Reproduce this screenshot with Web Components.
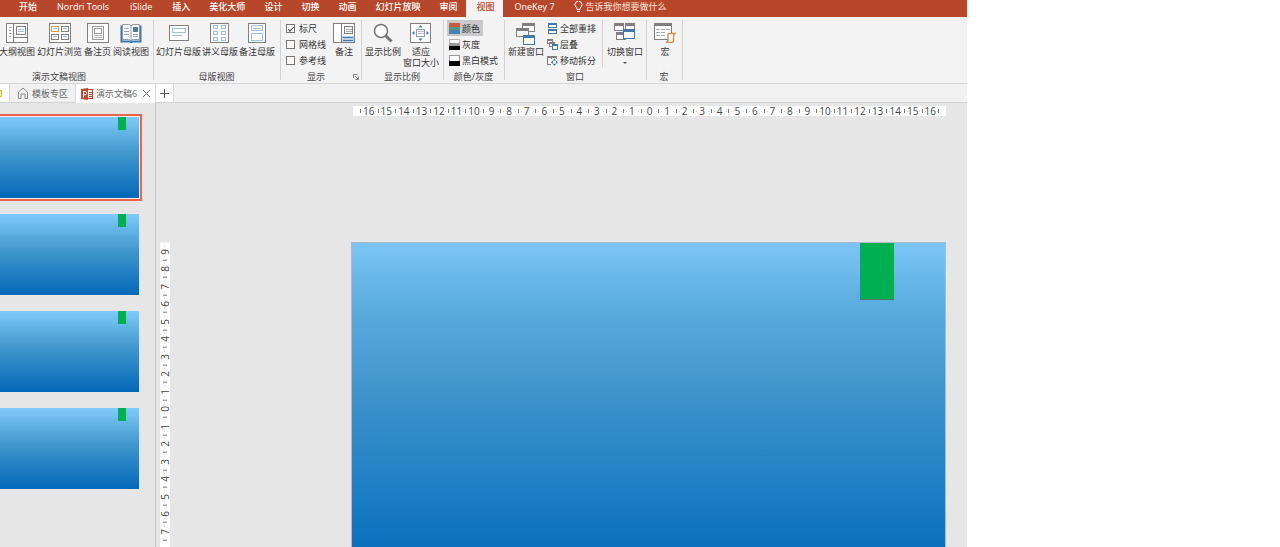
<!DOCTYPE html>
<html lang="zh-CN">
<head>
<meta charset="utf-8">
<title>演示文稿6</title>
<style>
html{height:100%}
body{margin:0;min-height:100%;display:grid;grid-template-columns:minmax(0,1fr) 313px;background:#fff;color:#333;
font-family:"Open Sans","Noto Sans CJK SC",sans-serif;font-size:9px;line-height:11px}
</style>
</head>
<body>
<slide-app></slide-app>
<script>
const G='#7f7f7f',B='#3f78ad',L='#9fc0dd';
const box=(x,y,w,h,c=G,f='#fff')=>`<rect x="${x}.5" y="${y}.5" width="${w}" height="${h}" fill="${f}" stroke="${c}"/>`;
const bar=(x,y,w,h,c)=>`<rect x="${x}" y="${y}" width="${w}" height="${h}" fill="${c}"/>`;
const ln=(d,c=G,w=1)=>`<path d="${d}" fill="none" stroke="${c}" stroke-width="${w}"/>`;
const win=(x,y,w,h,c)=>box(x,y,w,h,c)+bar(x,y,w+1,3,c);
const ICONS={
outline:[22,20,box(0,0,21,19)+ln('M7.5 1v18M8 14.5h13')+ln('M3 4.5h3M3 7.5h2M3 10.5h3M3 13.5h2','#a6a6a6')+box(10,3,9,8)+ln('M12 6.500h6M12 8.500h6',L)],
sorter:[22,20,box(0,0,21,19)+box(2,3,7,5,'#d99a4e')+box(12,3,7,5)+box(2,11,7,5)+box(12,11,7,5)+ln('M4 5.500h4M14 5.500h4M4 13.500h4M14 13.500h4',L)],
notes:[22,20,box(0,0,21,19)+box(5,3,11,13,'#9a9a9a')+box(7,5,7,5,'#9a9a9a')+ln('M7 12.500h8M7 14.500h8','#b5b5b5')],
reading:[22,20,`<path d="M1.500 2.500v16h8l1.500 1 1.500-1h8v-16" fill="#fff" stroke="${B}" stroke-width="2"/><path d="M2.500 1.500h6q2 0 2.500 1.500q.5-1.500 2.500-1.500h6v15h-6q-2 0-2.500 1.500q-.5-1.500-2.500-1.500h-6z" fill="#fff" stroke="#8a9aa8"/>`+ln('M11 3v14','#8a9aa8')+ln('M4 5.500h5M4 8.500h5M4 11.500h5M13 11.500h5M13 13.500h5','#9aa4ad')+bar(13,4,5,5,'#52799b')],
smaster:[22,20,box(1,2,19,15)+box(4,5,13,4,L)+ln('M4 12.500h10',L)],
hmaster:[22,20,box(1,0,18,19)+[2,8,14].map(y=>box(4,y,4,3,L)+box(12,y,4,3,L)).join('')],
nmaster:[22,20,box(2,0,17,19)+box(5,2,11,5,L)+ln('M7 5.500h8M7 11.500h8M7 15.500h8',L)+box(5,10,11,7,L)],
notepane:[22,20,box(0,0,21,19)+ln('M8.500 1v18')+box(11,3,8,7)+ln('M13 6.500h6M13 8.500h6','#aaa')+bar(9,13,12,6,'#bdd2e8')+ln('M10 14.500h10M10 17.500h10',B)],
zoom:[22,20,'<circle cx="9" cy="8" r="6.500" fill="#fff" stroke="#757575" stroke-width="1.500"/>'+ln('M13.500 12.500l6 6','#757575',3)],
fit:[22,20,box(0,0,20,19)+box(6,6,8,7,'#8aa0b4')+ln('M8 8.500h6M8 10.500h6','#c0c0c0')+`<path d="M10.500 2l2 2.500h-4zM10.500 18l2-2.500h-4zM2 10l2.500-2v4zM19 10l-2.500-2v4z" fill="${B}"/>`],
color:[11,11,bar(0,0,11,4,'#c8583f')+bar(0,4,11,3,'#4e9a86')+bar(0,7,11,4,'#4a7fb5')],
gray:[11,11,box(0,0,10,10,'#b0b0b0')+bar(0,4,11,3,'#999')+bar(0,7,11,4,'#000')],
mono:[11,11,box(0,0,10,10,'#999')+bar(0,6,11,5,'#000')],
newwin:[22,22,win(7,0,12,8,G)+win(1,5,12,8,G)+win(8,12,11,9,B)],
arrange:[11,11,box(1,0,8,4,B)+bar(1,0,9,2,B)+box(1,6,8,4,B)+bar(1,6,9,2,B)],
cascade:[11,11,box(0,0,5,4)+bar(0,0,6,2,G)+box(2,3,5,4)+bar(2,3,6,2,G)+box(5,5,5,5,B)+bar(5,5,6,2,B)],
split:[11,11,box(0,1,9,8)+bar(0,1,10,2,G)+ln('M4.500 2v7')+bar(4,4,7,7,'#f3f3f3')+`<path d="M7.500 3.500l1.700 2.200h-3.400zM7.500 11l1.700-2.200h-3.400zM3.800 7.300l2.200-1.700v3.400zM11 7.300l-2-1.700v3.400z" fill="${B}"/>`],
switchwin:[22,20,win(0,0,9,7,G)+win(11,0,9,7,G)+win(2,9,9,7,G)+win(9,6,11,9,B)],
macro:[22,20,box(0,0,17,16)+bar(0,0,18,3,G)+ln('M2 6.500h4M7 6.500h4M12 6.500h4M2 9.500h4M7 9.500h4M2 12.500h4M7 12.500h4','#aaa')+'<path d="M14.500 10.500h6.500q-1.500 1-1.500 3v4q0 2-2 2h-5.500q2-.5 2-2v-5q0-2 .5-2z" fill="#fff" stroke="#df8a45" stroke-width="1.400"/>'],
launch:[6,6,ln('M.5 4v-3.500h4')+ln('M2 2l3 3M5.500 2.500v3h-3')],
bulb:[9,12,'<path d="M3 8.500q0-1.500-1-2.500a3.500 3.500 0 1 1 5 0q-1 1-1 2.500z" fill="none" stroke="#fff"/><path d="M3 10.500h3" stroke="#fff"/>'],
home:[12,12,'<path d="M1.500 11.500v-6.500l4.500-4 4.500 4v6.500h-2.500v-4.500h-4v4.500z" fill="none" stroke="#888"/>'],
ppt:[12,12,'<rect x="6.500" y="1.500" width="5" height="9" fill="#fff" stroke="#c8452d"/><path d="M8 4.500h3M8 6.500h3M8 8.500h3" stroke="#c8452d"/><path d="M0 1l7-1v12l-7-1z" fill="#c8452d"/><path d="M2.500 9.500v-6h1.500a1.600 1.600 0 0 1 0 3.300h-1.500" fill="none" stroke="#fff"/>'],
close:[9,9,ln('M1 1l7 7M8 1l-7 7','#666')],
plus:[9,9,ln('M4.500 0v9M0 4.500h9','#555')],
doc:[4,9,box(-4,1,6,6,'#e3b93c','#fff7d8')],
};
const def=(tag,html,init)=>{
 const t=document.createElement('template');t.innerHTML=html;
 customElements.define(tag,class extends HTMLElement{
  constructor(){super();this.attachShadow({mode:'open'}).append(t.content.cloneNode(true))}
  connectedCallback(){if(init&&!this.ready){this.ready=true;init(this,this.shadowRoot)}}
 });
};
const RESET='button,input{font:inherit;color:inherit;background:none;border:0;margin:0;padding:0;line-height:inherit}button{display:block;white-space:nowrap}';
const setIcon=(e,r)=>{const i=document.createElement('ui-icon');i.setAttribute('name',e.getAttribute('icon'));r.querySelector('.ic').append(i)};

def('ui-icon','<style>:host{display:block;flex:none}svg{display:block}</style>',(e,r)=>{
 const [w,h,s]=ICONS[e.getAttribute('name')];
 r.innerHTML+=`<svg width="${w}" height="${h}" viewBox="0 0 ${w} ${h}" aria-hidden="true">${s}</svg>`});

def('menu-tab',`<style>${RESET}:host{display:block}button{height:17px;padding:0 9px 4px 10px;color:#fff;font-weight:500}
:host([latin]) button{padding:0 10px 4px 11px}
:host([active]) button{background:#f3f3f3;color:#b7472a}</style><button type="button" role="tab"><slot></slot></button>`);

def('menu-bar',`<style>${RESET}:host{display:flex;height:17px;background:#b7472a;color:#fff;padding-left:9px;overflow:hidden}
label{display:flex;gap:3px;padding:0 0 4px 9px;align-items:center}
input{width:90px;height:13px;outline:0}input::placeholder{color:#fbe6df;opacity:1}</style>
<menu-tab>开始</menu-tab><menu-tab latin>Nordri Tools</menu-tab><menu-tab latin>iSlide</menu-tab><menu-tab>插入</menu-tab><menu-tab>美化大师</menu-tab><menu-tab>设计</menu-tab><menu-tab>切换</menu-tab><menu-tab>动画</menu-tab><menu-tab>幻灯片放映</menu-tab><menu-tab>审阅</menu-tab><menu-tab active>视图</menu-tab><menu-tab latin>OneKey 7</menu-tab>
<label><ui-icon name="bulb"></ui-icon><input type="text" aria-label="告诉我你想要做什么" placeholder="告诉我你想要做什么"></label>`);

def('big-button',`<style>${RESET}:host{display:block}button{display:flex;flex-direction:column;align-items:center;gap:1px;text-align:center}
.ic{height:22px}.caret{border:2px solid transparent;border-top-color:#555;margin-top:4px}:host(:not([menu])) .caret{display:none}</style>
<button type="button"><span class="ic"></span><span><slot></slot></span><span class="caret"></span></button>`,setIcon);

def('small-button',`<style>${RESET}:host{display:block}button{display:flex;align-items:center;gap:2px;height:16px;padding:0 3px 0 2px}
:host([pressed]) button{background:#c9c9c9}</style><button type="button"><span class="ic"></span><slot></slot></button>`,setIcon);

def('check-option',`<style>:host{display:block}label{display:flex;align-items:center;gap:4px;height:16px}
input{appearance:none;margin:0;width:9px;height:9px;border:1px solid #777;background:#fff;display:grid;place-items:center}
input:checked::before{content:"";width:5px;height:2px;border:solid #444;border-width:0 0 1px 1px;transform:rotate(-45deg)}</style>
<label><input type="checkbox"><span><slot></slot></span></label>`,(e,r)=>{r.querySelector('input').checked=e.hasAttribute('checked')});

def('ribbon-group',`<style>:host{display:flex;flex-direction:column;box-sizing:border-box;position:relative}
:host::after{content:"";position:absolute;right:0;top:3px;bottom:3px;width:1px;background:#d4d4d4}
.items{display:flex;flex:1;align-items:flex-start}.cap{text-align:center;height:13px;line-height:13px;color:#444;margin-right:var(--cut,2px)}
.corner{position:absolute;right:3px;bottom:3px}</style>
<div class="items"><slot></slot></div><div class="cap"></div><div class="corner"><slot name="corner"></slot></div>`,
(e,r)=>{r.querySelector('.cap').textContent=e.getAttribute('caption')});

def('ribbon-bar',`<style>${RESET}:host{display:flex;height:66px;background:#f3f3f3;border-bottom:1px solid #d6d6d6;overflow:hidden}
ribbon-group{flex:none}big-button{padding-top:6px}.stack{display:flex;flex-direction:column;padding-top:3px}
.g1{width:154px;--cut:36px}.g1 div{display:flex;gap:2px;margin-left:-1px}
.g2{width:127px}.g2 div{display:flex;gap:1px;margin-left:2px}
.g3{width:81px;padding-left:5px;--cut:16px}.g3 .stack{width:47px}
.g4{width:82px}.g4 div{display:flex;gap:2px;margin-left:3px}
.g5{width:61px}.g5 .stack{margin-left:3px;align-items:flex-start}
.g6{width:142px}.g6 .first{margin-left:3px}.g6 .stack{border-right:1px solid #d4d4d4;padding:0 3px 0 1px;margin:3px 4px 0 0}
.g7{width:36px}.g7 big-button{margin:auto;margin-top:0}</style>
<ribbon-group class="g1" caption="演示文稿视图"><div><big-button icon="outline">大纲视图</big-button><big-button icon="sorter">幻灯片浏览</big-button><big-button icon="notes">备注页</big-button><big-button icon="reading">阅读视图</big-button></div></ribbon-group>
<ribbon-group class="g2" caption="母版视图"><div><big-button icon="smaster">幻灯片母版</big-button><big-button icon="hmaster">讲义母版</big-button><big-button icon="nmaster">备注母版</big-button></div></ribbon-group>
<ribbon-group class="g3" caption="显示"><div class="stack"><check-option checked>标尺</check-option><check-option>网格线</check-option><check-option>参考线</check-option></div><big-button icon="notepane">备注</big-button><button slot="corner" type="button" aria-label="显示选项"><ui-icon name="launch"></ui-icon></button></ribbon-group>
<ribbon-group class="g4" caption="显示比例"><div><big-button icon="zoom">显示比例</big-button><big-button icon="fit">适应<br>窗口大小</big-button></div></ribbon-group>
<ribbon-group class="g5" caption="颜色/灰度"><div class="stack"><small-button icon="color" pressed>颜色</small-button><small-button icon="gray">灰度</small-button><small-button icon="mono">黑白模式</small-button></div></ribbon-group>
<ribbon-group class="g6" caption="窗口"><big-button class="first" icon="newwin">新建窗口</big-button><div class="stack"><small-button icon="arrange">全部重排</small-button><small-button icon="cascade">层叠</small-button><small-button icon="split">移动拆分</small-button></div><big-button icon="switchwin" menu>切换窗口</big-button></ribbon-group>
<ribbon-group class="g7" caption="宏"><big-button icon="macro">宏</big-button></ribbon-group>`);

def('document-tabs',`<style>${RESET}:host{display:flex;height:18px;background:#f1f1f1;border-bottom:1px solid #d2d2d2;color:#666}
.tab{display:flex;align-items:center;border-right:1px solid #d8d8d8;padding:0 7px;gap:4px;box-sizing:border-box}
.cut{width:10px;padding:0;background:#fff}.on{background:#fff;padding:0 4px 0 5px;width:80px;margin-bottom:-1px}
.on button:last-child{margin-left:auto}.add{padding:0 4px;background:#fff}button{display:flex;align-items:center;gap:3px}</style>
<div class="tab cut"><ui-icon name="doc"></ui-icon></div>
<div class="tab"><button type="button"><ui-icon name="home"></ui-icon>模板专区</button></div>
<div class="tab on"><button type="button"><ui-icon name="ppt"></ui-icon>演示文稿6</button><button type="button" aria-label="关闭"><ui-icon name="close"></ui-icon></button></div>
<button class="tab add" type="button" aria-label="新建"><ui-icon name="plus"></ui-icon></button>`);

def('slide-view',`<style>:host{display:block;box-sizing:border-box;background:linear-gradient(#7cc6f5 0,#5cade0 18%,#3d93ca 46%,#1b7dc4 76%,#0a6ebd 93%,#0068b8)}
i{display:block;width:34px;height:57px;box-sizing:border-box;background:#00b050;border-bottom:1px solid #487768;margin:0 51px 0 auto}
:host([small]){background:linear-gradient(#80cafa 0,#3f96cc 46%,#0468b9)}
:host([small]) i{width:8px;height:13px;border:0;margin-right:13px}</style><i></i>`);

def('slide-thumb',`<style>:host{display:block;box-sizing:border-box;height:87px;border:solid transparent;border-width:2px 2px 2px 0;padding:1px 1px 1px 0}
:host([selected]){border-color:#e8674c;background:#f8ecea}slide-view{height:81px}</style><slide-view small></slide-view>`);

def('slide-ruler',`<style>:host{display:flex;background:linear-gradient(#777,#777) right 7px top 3px/1px 4px no-repeat #fff;color:#444;padding:0 7px;height:10px;line-height:10px;font-size:10px;box-sizing:border-box}
:host([vertical]){writing-mode:vertical-rl;transform:rotate(180deg);width:10px;height:auto;padding:0;justify-content:flex-end;background:#fff}
span{flex:1 1 0;min-width:0;min-height:0;display:flex;justify-content:center;white-space:nowrap;
background:linear-gradient(#777,#777) left 0 top 3px/1px 4px no-repeat,linear-gradient(#ccc,#ccc) 3px 5px/1px 1px no-repeat,linear-gradient(#ccc,#ccc) 15px 5px/1px 1px no-repeat}
:host([vertical]) span{flex:0 0 calc(100%/19);background:linear-gradient(#777,#777) top/4px 1px no-repeat,linear-gradient(#ccc,#ccc) 5px 4px/1px 1px no-repeat,linear-gradient(#ccc,#ccc) 5px 14px/1px 1px no-repeat}
</style>`,(e,r)=>{for(let i=+e.getAttribute('from');i<=+e.getAttribute('to');i++){const s=document.createElement('span');s.textContent=Math.abs(i);r.append(s)}});

def('edit-area',`<style>:host{display:grid;grid-template-columns:4px 10px 181px minmax(0,1fr) 21px;grid-template-rows:3px 10px 126px auto;align-content:start;overflow:hidden;height:100%}
.h{grid-area:2/4;margin-left:2px}.v{grid-area:4/2;margin:1px 0}slide-view{grid-area:4/4;aspect-ratio:16/9;border:1px solid #a9bccb;border-bottom:0}</style>
<slide-ruler class="h" from="-16" to="16"></slide-ruler><slide-ruler class="v" from="-7" to="9" vertical></slide-ruler><slide-view></slide-view>`);

def('slide-app',`<style>:host{display:flex;flex-direction:column;height:100vh;overflow:hidden;background:#e6e6e6}
main{flex:1;min-height:0;display:grid;grid-template-columns:156px minmax(0,1fr)}
nav{padding:11px 13px 0 0;border-right:1px solid #c6c6c6;box-sizing:border-box;display:flex;flex-direction:column;gap:10px;overflow:hidden}
slide-thumb{flex:none}</style>
<menu-bar></menu-bar><ribbon-bar></ribbon-bar><document-tabs></document-tabs>
<main><nav aria-label="幻灯片"><slide-thumb selected></slide-thumb><slide-thumb></slide-thumb><slide-thumb></slide-thumb><slide-thumb></slide-thumb></nav><edit-area></edit-area></main>`);
</script>
</body>
</html>
